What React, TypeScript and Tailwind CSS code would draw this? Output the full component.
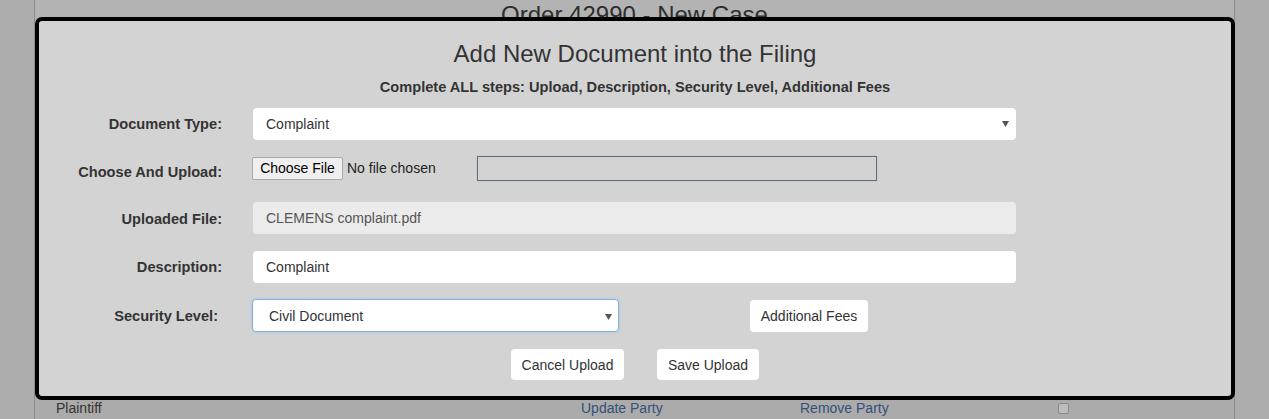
import React from 'react';

const font = { fontFamily: '"Liberation Sans", Arial, sans-serif' };

function Caret() {
  return (
    <svg width="7" height="6" viewBox="0 0 7 6" className="shrink-0">
      <path d="M0 0 L7 0 L3.5 6 Z" fill="#555" />
    </svg>
  );
}

function Label({ children, className = '' }: { children: React.ReactNode; className?: string }) {
  return (
    <div className={`w-[183px] shrink-0 text-right text-[14.6px] font-bold text-[#333] ${className}`}>
      {children}
    </div>
  );
}

function WhiteButton({ children, className = '' }: { children: React.ReactNode; className?: string }) {
  return (
    <div
      className={`flex items-center justify-center rounded-[4px] bg-white text-[14px] text-[#333] ${className}`}
    >
      {children}
    </div>
  );
}

export default function App() {
  return (
    <div className="relative h-[419px] w-[1269px] overflow-hidden bg-[#adadad]" style={font}>
      {/* page behind the overlay */}
      <div className="ml-[34px] flex h-full w-[1201px] flex-col border-x border-[#8c8c8c] bg-[#b3b3b3]">
        <div className="pt-[1px] text-center text-[24px] leading-[28px] text-[#2e2e2e]">
          Order 42990 - New Case
        </div>
        <div className="mt-auto flex h-[21px] items-center bg-[#ababab] text-[14px] text-[#333]">
          <span className="ml-[21px] w-[525px]">Plaintiff</span>
          <span className="w-[219px] text-[#35507a]">Update Party</span>
          <span className="w-[258px] text-[#35507a]">Remove Party</span>
          <span className="h-[11px] w-[11px] rounded-[2px] border border-[#8a8a8a] bg-[#bdbdbd]" />
        </div>
      </div>

      {/* modal */}
      <div className="absolute left-[35px] top-[17px] h-[383px] w-[1200px] rounded-[7px] border-4 border-black bg-[#d3d3d3]">
        <div className="pt-[18px] text-center text-[24px] leading-[30px] text-[#333]">
          Add New Document into the Filing
        </div>
        <div className="mt-[8px] text-center text-[14.6px] font-bold leading-[20px] text-[#333]">
          Complete ALL steps: Upload, Description, Security Level, Additional Fees
        </div>

        <div className="mt-[11px] flex h-[32px] items-center">
          <Label className="pt-[2px]">Document Type:</Label>
          <div className="ml-[31px] flex h-full w-[763px] items-center justify-between rounded-[4px] bg-white pl-[13px] pr-[7px] text-[14px] text-[#333]">
            <span>Complaint</span>
            <Caret />
          </div>
        </div>

        <div className="mt-[16px] flex h-[24px] items-center">
          <Label className="pt-[10px]">Choose And Upload:</Label>
          <div className="ml-[30px] flex h-[23px] w-[91px] items-center justify-center rounded-[2px] border border-[#a9a9a9] bg-[#efefef] text-[14px] text-black">
            Choose File
          </div>
          <span className="ml-[4px] w-[130px] text-[14px] text-[#222]">No file chosen</span>
          <div className="h-[25px] w-[400px] border border-[#5f6b76] shadow-[0_0_2px_#b8c8d8]" />
        </div>

        <div className="mt-[22px] flex h-[32px] items-center">
          <Label className="pt-[3px]">Uploaded File:</Label>
          <div className="ml-[31px] flex h-full w-[763px] items-center rounded-[4px] bg-[#ebebeb] pl-[13px] text-[14px] text-[#555]">
            CLEMENS complaint.pdf
          </div>
        </div>

        <div className="mt-[17px] flex h-[32px] items-center">
          <Label className="pt-[2px]">Description:</Label>
          <div className="ml-[31px] flex h-full w-[763px] items-center rounded-[4px] bg-white pl-[13px] text-[14px] text-[#333]">
            Complaint
          </div>
        </div>

        <div className="mt-[16px] flex h-[33px] items-center">
          <Label className="pr-[4px] pt-[2px]">Security Level:</Label>
          <div className="ml-[30px] flex h-full w-[367px] items-center justify-between rounded-[4px] border border-[#7fb0e0] bg-white pl-[16px] pr-[6px] pt-[2px] text-[14px] text-[#333] shadow-[0_0_3px_#9cc4ea]">
            <span>Civil Document</span>
            <Caret />
          </div>
          <WhiteButton className="ml-[131px] h-[32px] w-[118px] pt-[2px]">Additional Fees</WhiteButton>
        </div>

        <div className="mt-[17px] flex h-[31px] justify-center gap-[33px]">
          <WhiteButton className="h-full w-[113px] pt-[2px]">Cancel Upload</WhiteButton>
          <WhiteButton className="h-full w-[102px] pt-[2px]">Save Upload</WhiteButton>
        </div>
      </div>
    </div>
  );
}
